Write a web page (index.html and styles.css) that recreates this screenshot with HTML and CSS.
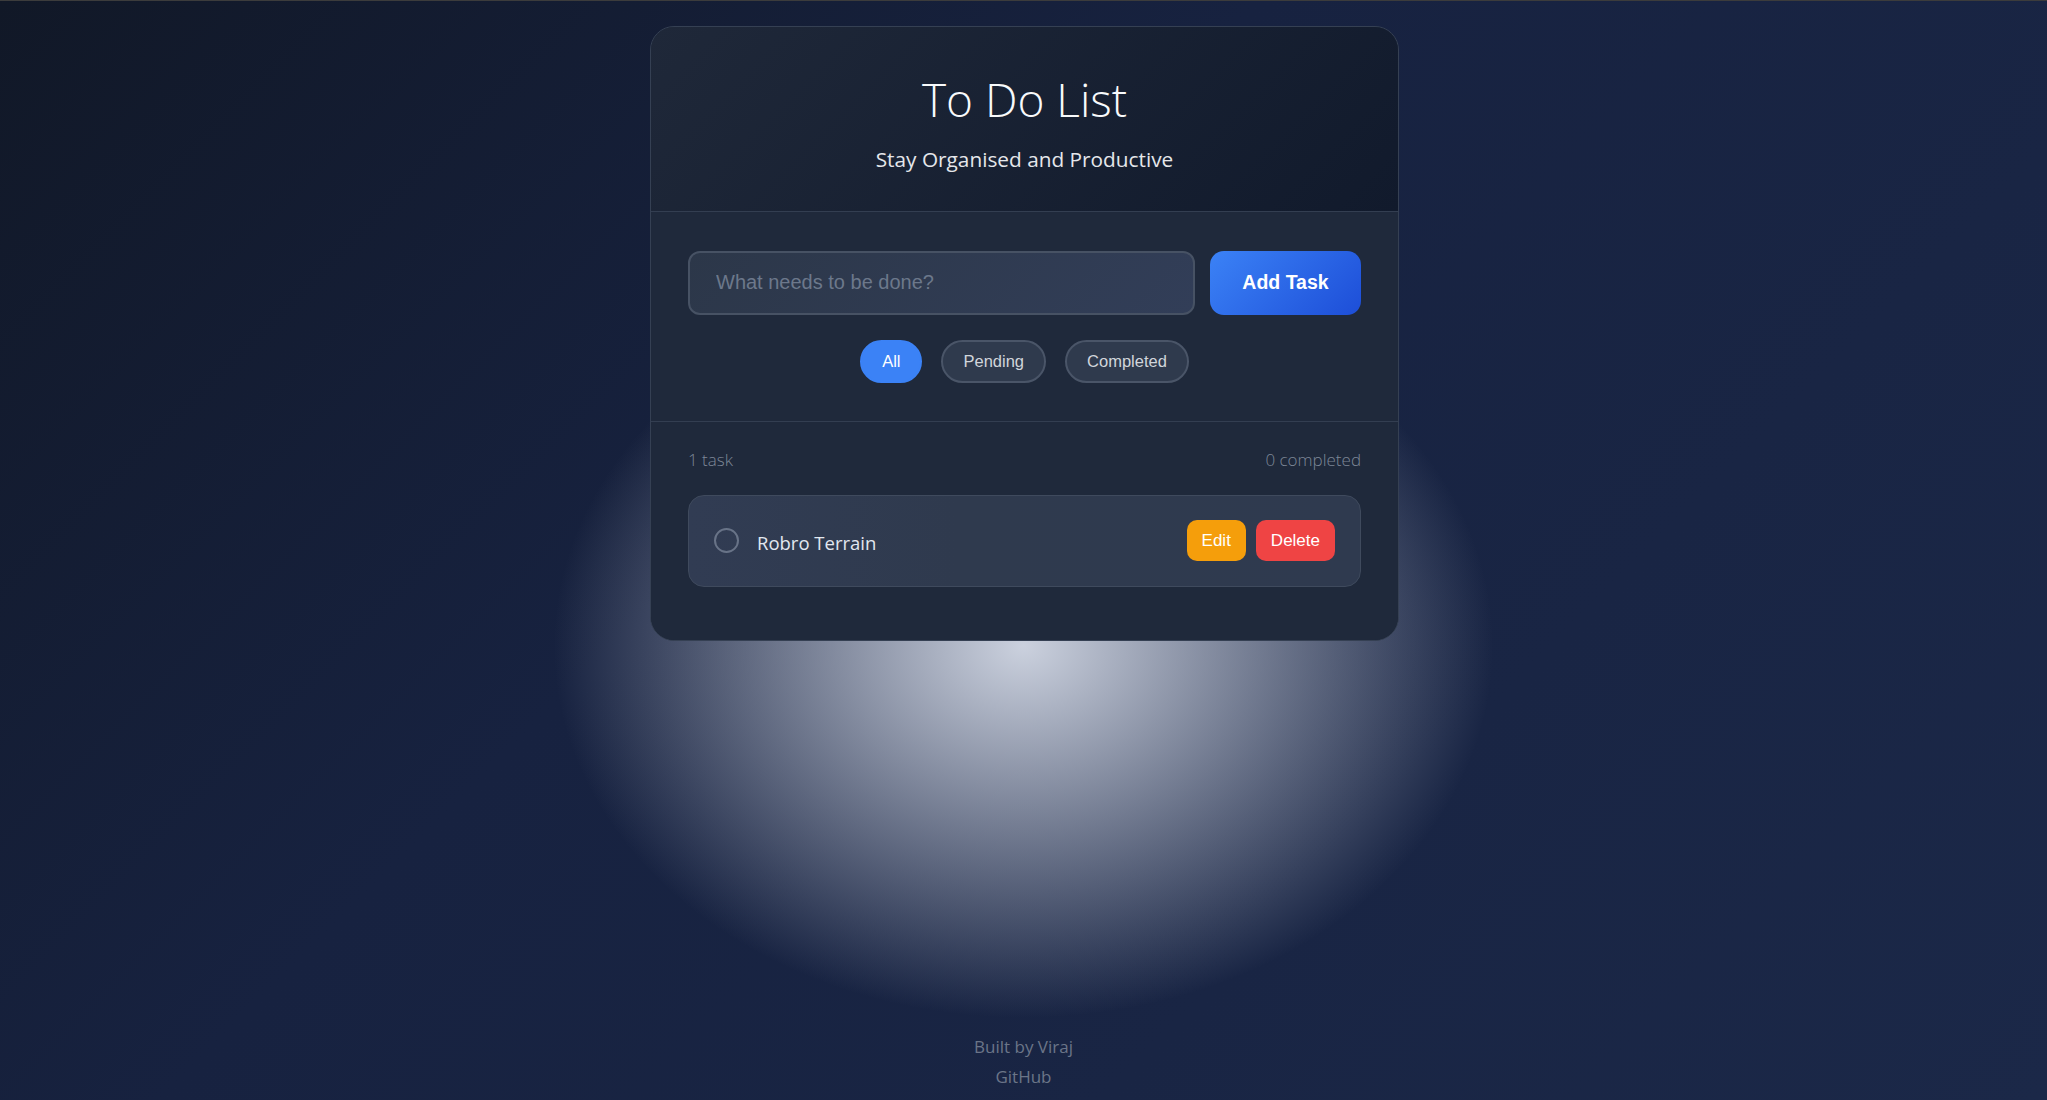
FILE: index.html
```html
<!DOCTYPE html>
<html lang="en">
<head>
<meta charset="utf-8">
<title>To Do List</title>
<link rel="stylesheet" href="styles.css">
</head>
<body>
<main class="page">
  <div class="card">
    <header class="card-header">
      <h1 class="title">To Do List</h1>
      <p class="subtitle">Stay Organised and Productive</p>
    </header>
    <section class="composer">
      <div class="input-row">
        <input class="task-input" type="text" placeholder="What needs to be done?">
        <button class="add-btn">Add Task</button>
      </div>
      <div class="filters">
        <button class="filter active">All</button>
        <button class="filter">Pending</button>
        <button class="filter">Completed</button>
      </div>
    </section>
    <section class="list-section">
      <div class="stats">
        <span>1 task</span>
        <span>0 completed</span>
      </div>
      <ul class="task-list">
        <li class="task">
          <span class="check"></span>
          <span class="task-text">Robro Terrain</span>
          <div class="actions">
            <button class="btn-edit">Edit</button>
            <button class="btn-delete">Delete</button>
          </div>
        </li>
      </ul>
    </section>
  </div>
</main>
<footer class="footer">
  <p class="footer-line">Built by Viraj</p>
  <a class="footer-link" href="#">GitHub</a>
</footer>
</body>
</html>
```
FILE: styles.css
```css
* { box-sizing: border-box; }

html, body { margin: 0; padding: 0; }

body {
  min-height: 100vh;
  border-top: 1px solid #3c3c3c;
  display: flex;
  flex-direction: column;
  font-family: "Open Sans", "Noto Sans", sans-serif;
  background-color: #1a2644;
  background-image:
    radial-gradient(ellipse 470px 372px at 50% 646px, rgba(203, 209, 222, 1) 0%, rgba(203, 209, 222, 0) 100%),
    linear-gradient(135deg, #111827 0%, #172240 40%, #1b2848 100%);
  background-repeat: no-repeat;
}

.page {
  flex: 1;
  display: flex;
  justify-content: center;
  align-items: flex-start;
  padding-top: 25px;
}

.card {
  width: 749px;
  margin-left: 2px;
  background: #1f293b;
  border: 1px solid #354053;
  border-radius: 24px;
  overflow: hidden;
}

.card-header {
  padding: 44px 37px 39px;
  text-align: center;
  background: linear-gradient(135deg, #1f2839 0%, #111a2c 100%);
  border-bottom: 1px solid #333e51;
}

.title {
  margin: 0;
  font-size: 46px;
  line-height: 57.6px;
  font-weight: 300;
  color: #f8fafc;
}

.subtitle {
  margin: 18px 0 0;
  font-size: 20.8px;
  line-height: 25px;
  font-weight: 400;
  color: #e5e7eb;
}

.composer {
  padding: 39px 37px 38px;
  border-bottom: 1px solid #333e51;
  background: #1f293b;
}

.input-row {
  display: flex;
  gap: 15px;
}

.task-input {
  flex: 1;
  height: 64px;
  padding: 0 26px;
  border: 2px solid #475264;
  border-radius: 12px;
  background: linear-gradient(135deg, #2c3749 0%, #323e58 100%);
  font-family: "Liberation Sans", Arial, sans-serif;
  font-size: 20px;
  color: #e5e7eb;
  outline: none;
}

.task-input::placeholder { color: #6c788b; }

.add-btn {
  width: 151px;
  height: 64px;
  border: none;
  border-radius: 14px;
  background: linear-gradient(135deg, #3b82f6 0%, #1d4ed8 100%);
  color: #ffffff;
  font-family: "Liberation Sans", Arial, sans-serif;
  font-size: 19.5px;
  font-weight: 700;
}

.filters {
  margin-top: 25px;
  display: flex;
  justify-content: center;
  gap: 19px;
}

.filter {
  padding: 10px 20px;
  border: 2px solid #4a5568;
  border-radius: 999px;
  background: #2f3a4d;
  color: #d1d5db;
  font-family: "Liberation Sans", Arial, sans-serif;
  font-size: 16.5px;
  line-height: 19px;
}

.filter.active {
  background: #3b82f6;
  border-color: #3b82f6;
  color: #ffffff;
}

.list-section {
  padding: 26px 37px 53px;
  background: #1f293b;
}

.stats {
  display: flex;
  justify-content: space-between;
  font-size: 17px;
  line-height: 24px;
  font-weight: 300;
  color: #7d8797;
  margin-bottom: 23px;
}

.task-list {
  list-style: none;
  margin: 0;
  padding: 0;
}

.task {
  display: flex;
  align-items: center;
  padding: 24.5px 25px;
  border: 1px solid #3f4a5d;
  border-radius: 16px;
  background: linear-gradient(90deg, #313c53 0%, #2f3a4e 40%, #2f3a4f 100%);
}

.check {
  width: 25px;
  height: 25px;
  border: 2px solid #687387;
  border-radius: 50%;
  flex-shrink: 0;
}

.task-text {
  flex: 1;
  margin-left: 18px;
  padding-top: 3px;
  font-size: 18.5px;
  color: #e2e8f0;
}

.actions {
  display: flex;
  gap: 10px;
}

.btn-edit, .btn-delete {
  padding: 10px 15px;
  border: none;
  border-radius: 10px;
  color: #ffffff;
  font-family: "Liberation Sans", Arial, sans-serif;
  font-size: 17px;
  line-height: 21px;
}

.btn-edit { background: #f59e0b; }
.btn-delete { background: #ef4444; }

.footer {
  display: flex;
  flex-direction: column;
  align-items: center;
  gap: 6px;
  padding-bottom: 11px;
  font-size: 17px;
  line-height: 24px;
  color: #6b7588;
}

.footer-line { margin: 0; }

.footer-link {
  color: #6b7588;
  text-decoration: none;
}
```
